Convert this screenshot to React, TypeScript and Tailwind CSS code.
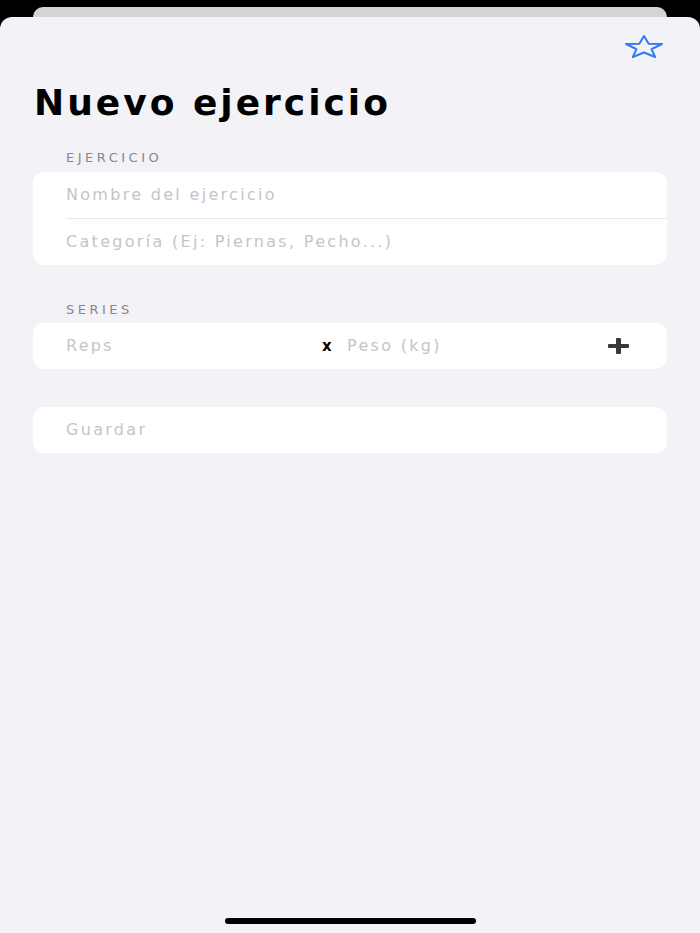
import { useState } from "react"

const font = { fontFamily: '"DejaVu Sans", "Liberation Sans", sans-serif' }

function StarIcon() {
    return (
        <svg width="38" height="23" viewBox="0 0 38 23" fill="none">
            <path
                d="M19 1 L23.67 8.66 L37 9.02 L26.56 14.12 L30.13 22 L19 17.49 L7.87 22 L11.44 14.12 L1 9.02 L14.33 8.66 Z"
                stroke="#3478f6"
                strokeWidth="2"
                strokeLinejoin="round"
            />
        </svg>
    )
}

function PlusIcon() {
    return (
        <svg width="21" height="16" viewBox="0 0 21 16">
            <rect x="0" y="6" width="21" height="4" rx="1" fill="#3a3a3c" />
            <rect x="8" y="0" width="5" height="16" rx="1" fill="#3a3a3c" />
        </svg>
    )
}

function SectionLabel({ children, className }: { children: string; className?: string }) {
    return (
        <p className={"ml-[66px] text-[13px] leading-[13px] tracking-[3.5px] text-[#88888c] " + (className ?? "")}>
            {children}
        </p>
    )
}

export default function App() {
    const [nombre, setNombre] = useState("")
    const [categoria, setCategoria] = useState("")
    const [reps, setReps] = useState("")
    const [peso, setPeso] = useState("")

    const inputCls =
        "w-full bg-transparent outline-none text-[16px] leading-[20px] tracking-[2.3px] text-black placeholder:text-[#c5c5c8]"

    return (
        <div className="h-[933px] bg-black flex flex-col overflow-hidden" style={font}>
            <div className="mx-[33px] mt-[7px] h-[10px] bg-[#d3d3d8] rounded-t-[10px]" />
            <div className="flex-1 flex flex-col bg-[#f2f2f7] rounded-t-[12px]">
                <div className="flex justify-end pt-[18px] pr-[37px]">
                    <button type="button" className="block">
                        <StarIcon />
                    </button>
                </div>

                <h1 className="mt-[27px] ml-[34px] text-[36px] leading-[36px] font-bold tracking-[3px] text-black">
                    Nuevo ejercicio
                </h1>

                <SectionLabel className="mt-[30px]">EJERCICIO</SectionLabel>
                <div className="mt-[8px] mx-[33px] bg-white rounded-[11px] overflow-hidden">
                    <div className="h-[46px] flex items-center pl-[33px] pr-[20px]">
                        <input
                            className={inputCls}
                            placeholder="Nombre del ejercicio"
                            value={nombre}
                            onChange={(e) => setNombre(e.target.value)}
                        />
                    </div>
                    <div className="ml-[33px] h-px bg-[#e8e8ec]" />
                    <div className="h-[46px] flex items-center pl-[33px] pr-[20px]">
                        <input
                            className={inputCls}
                            placeholder="Categoría (Ej: Piernas, Pecho...)"
                            value={categoria}
                            onChange={(e) => setCategoria(e.target.value)}
                        />
                    </div>
                </div>

                <SectionLabel className="mt-[38px]">SERIES</SectionLabel>
                <div className="mt-[7px] mx-[33px] h-[46px] bg-white rounded-[11px] flex items-center pl-[33px] pr-[38px]">
                    <input
                        className={inputCls + " flex-1 min-w-0"}
                        placeholder="Reps"
                        value={reps}
                        onChange={(e) => setReps(e.target.value)}
                    />
                    <span className="ml-[6px] w-[10px] text-[15px] leading-[20px] font-semibold text-black">x</span>
                    <input
                        className={inputCls + " flex-1 min-w-0 ml-[15px]"}
                        placeholder="Peso (kg)"
                        value={peso}
                        onChange={(e) => setPeso(e.target.value)}
                    />
                    <button type="button" className="ml-[11px] block">
                        <PlusIcon />
                    </button>
                </div>

                <button
                    type="button"
                    className="mt-[38px] mx-[33px] h-[46px] bg-white rounded-[11px] flex items-center pl-[33px] text-[16px] leading-[20px] tracking-[2.3px] text-[#c5c5c8]"
                >
                    Guardar
                </button>

                <div className="mt-auto mb-[9px] mx-auto w-[251px] h-[6px] rounded-full bg-black" />
            </div>
        </div>
    )
}
